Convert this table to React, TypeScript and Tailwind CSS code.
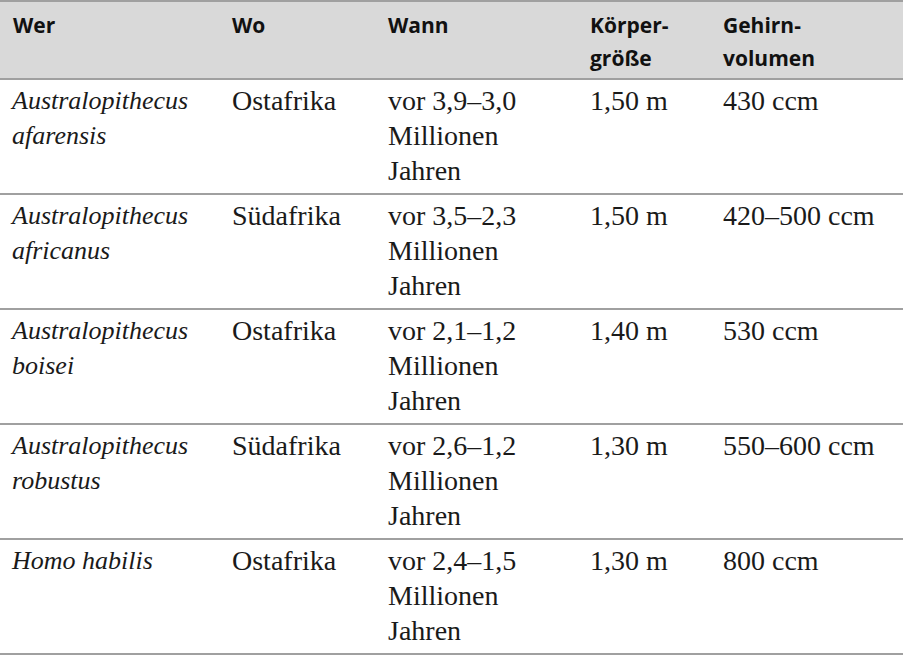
import React from "react";

const rows = [
  { wer: ["Australopithecus", "afarensis"], wo: "Ostafrika", von: "3,9", bis: "3,0", groesse: "1,50 m", vol: "430 ccm" },
  { wer: ["Australopithecus", "africanus"], wo: "Südafrika", von: "3,5", bis: "2,3", groesse: "1,50 m", vol: "420–500 ccm" },
  { wer: ["Australopithecus", "boisei"], wo: "Ostafrika", von: "2,1", bis: "1,2", groesse: "1,40 m", vol: "530 ccm" },
  { wer: ["Australopithecus", "robustus"], wo: "Südafrika", von: "2,6", bis: "1,2", groesse: "1,30 m", vol: "550–600 ccm" },
  { wer: ["Homo habilis"], wo: "Ostafrika", von: "2,4", bis: "1,5", groesse: "1,30 m", vol: "800 ccm" },
];

export default function App() {
  return (
    <div className="w-[903px] h-[656px] bg-white text-[#1a1a1a]">
      <div className="grid grid-cols-[219px_156px_202px_133px_1fr] bg-[#d9d9d9] border-t-2 border-b-2 border-[#a0a0a0] h-[80px] font-[family-name:Open_Sans,sans-serif] font-bold text-[21px] leading-[33px] text-[#111]">
        <div className="pl-[13px] pt-[7px]">Wer</div>
        <div className="pl-[13px] pt-[7px]">Wo</div>
        <div className="pl-[13px] pt-[7px]">Wann</div>
        <div className="pl-[13px] pt-[7px]">
          <div>Körper-</div>
          <div>größe</div>
        </div>
        <div className="pl-[13px] pt-[7px]">
          <div>Gehirn-</div>
          <div>volumen</div>
        </div>
      </div>
      {rows.map((r, i) => (
        <div
          key={i}
          className="grid grid-cols-[219px_156px_202px_133px_1fr] border-b-2 border-[#a0a0a0] h-[115px] font-[family-name:Liberation_Serif,serif] text-[28px] leading-[35px]"
        >
          <div className="pl-[12px] pt-[3px] italic text-[26px]">
            {r.wer.map((w, j) => (
              <div key={j}>{w}</div>
            ))}
          </div>
          <div className="pl-[13px] pt-[3px]">{r.wo}</div>
          <div className="pl-[13px] pt-[3px]">
            <div>
              vor {r.von}–{r.bis}
            </div>
            <div>Millionen</div>
            <div>Jahren</div>
          </div>
          <div className="pl-[13px] pt-[3px]">{r.groesse}</div>
          <div className="pl-[13px] pt-[3px]">{r.vol}</div>
        </div>
      ))}
    </div>
  );
}
